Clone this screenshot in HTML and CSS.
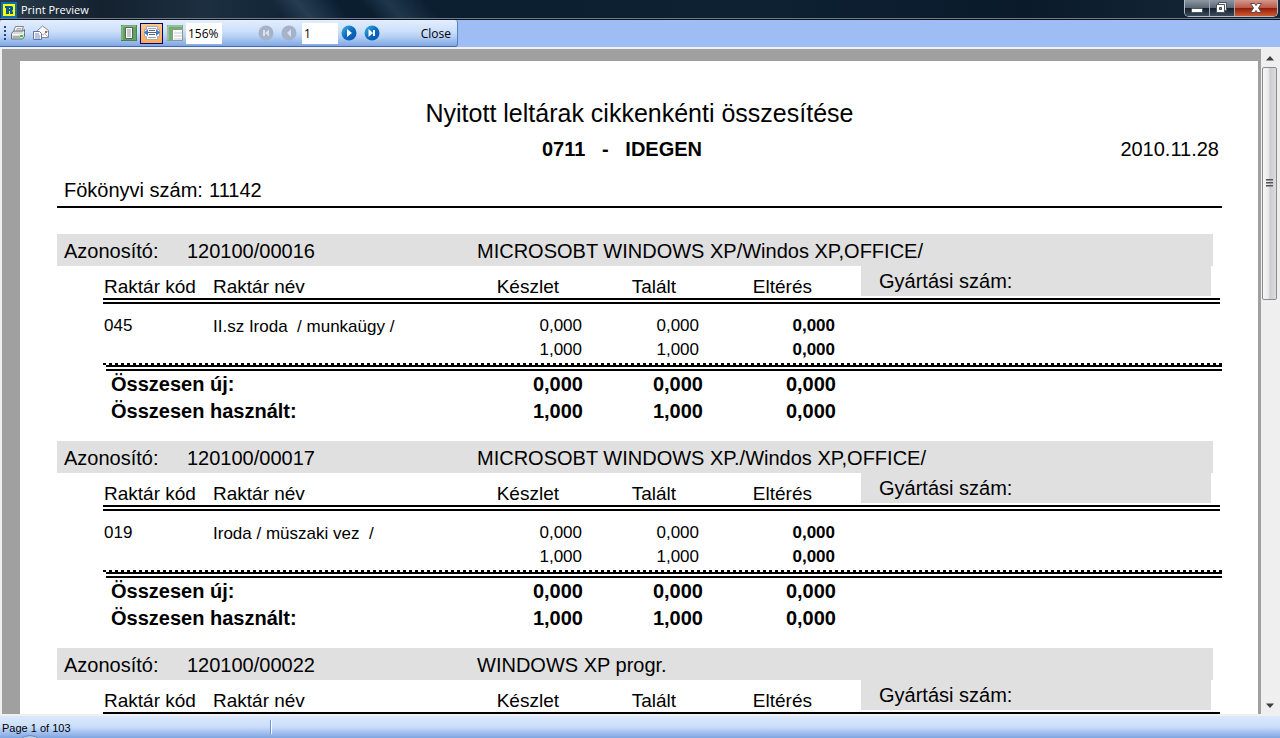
FILE: index.html
```html
<!DOCTYPE html>
<html lang="hu">
<head>
<meta charset="utf-8">
<title>Print Preview</title>
<link rel="stylesheet" href="styles.css">
</head>
<body>
<header class="titlebar">
  <svg class="app-icon" width="16" height="16" viewBox="0 0 16 16" aria-hidden="true">
    <rect width="16" height="16" fill="#0b6fb4"/>
    <rect x="2" y="2" width="12" height="12" fill="#ffff00"/>
    <path d="M4 4h7l1 1v3l-1 1 1 1v2H9v-3H8v3H5V6H4zM8 6v1h1V6z" fill="#075a96" fill-rule="evenodd"/>
  </svg>
  <h1 class="window-title">Print Preview</h1>
  <div class="window-buttons">
    <button class="win-btn" aria-label="Minimize"><svg width="24" height="15" viewBox="0 0 24 15"><rect x="6.500" y="7.500" width="11" height="4" rx="1" fill="#fff" stroke="#4b5560"/></svg></button>
    <button class="win-btn" aria-label="Restore"><svg width="24" height="15" viewBox="0 0 24 15"><path d="M8.500 1.500h8v8h-8z" fill="#eee" stroke="#4b5560"/><path d="M6.500 3.500h8v8h-8z" fill="#fff" stroke="#4b5560"/><path d="M9.500 6.500h2v2h-2z" fill="#8a929b" stroke="#3c4651"/></svg></button>
    <button class="win-btn win-close" aria-label="Close window"><svg width="42" height="15" viewBox="0 0 42 15"><path d="M15.500 2.500h4l1.500 2 1.500-2h4L23.500 7l3 4.500h-4l-1.500-2-1.500 2h-4l3-4.500z" fill="#fff" stroke="#5a4a50"/></svg></button>
  </div>
</header>

<div class="toolbar-area">
  <div class="toolbar" role="toolbar" aria-label="Preview">
    <span class="grip"></span>
    <button class="tool" aria-label="Print"><svg width="16" height="16" viewBox="0 0 16 16"><path d="M5.500 1.500h8l-2 5h-8z" fill="#fff" stroke="#7d8188"/><path d="M6.500 3.500h5M6 5h5" stroke="#a9adb5"/><path d="M1.500 8.500l2-2.500h9l2-1.500v7l-2 2.500h-11z" fill="#d9d9dc" stroke="#6b6f78"/><path d="M2 9.500h10.500L14 7" fill="none" stroke="#f8f8f8"/><path d="M3 12h7" stroke="#7f838b"/><path d="M10 10h3v2h-3z" fill="#27d420"/></svg></button>
    <button class="tool" aria-label="Send by mail"><svg width="16" height="16" viewBox="0 0 16 16"><path d="M4.500 5.500l5-4.500 6 4.500v7h-11z" fill="#fff" stroke="#8086a4"/><path d="M5 6l5 4 5-4M5 12l3-3M15 12l-3-3" fill="none" stroke="#aeb4cc"/><rect x="12" y="6" width="2" height="2" fill="#e0572d"/><path d="M.5 6.500h6l2 2v6h-8z" fill="#f7f9ff" stroke="#6672a4"/><path d="M2 9h4M2 11h5M2 13h5" stroke="#7f8bb8"/></svg></button>
    <span class="tool-gap"></span>
    <button class="tool view" aria-label="Whole page"><svg width="16" height="16" viewBox="0 0 16 16"><rect x=".5" y=".5" width="15" height="15" fill="#62a35f" stroke="#4f7f52"/><path d="M1 15V1h14" fill="none" stroke="#a8cda4"/><path d="M4.500 2.500h7v11h-7z" fill="#fff" stroke="#52625a"/><path d="M6 5h4M6 7h4M6 9h4M6 11h4" stroke="#8894a0"/></svg></button>
    <button class="tool view active" aria-label="Page width" aria-pressed="true"><svg width="16" height="16" viewBox="0 0 16 16"><path d="M2.500 1.500h11v3h2v7h-2v3h-11v-3h-2v-7h2z" fill="#fff" stroke="#a9a9b5"/><path d="M4 3.500h8M4 12.500h8" stroke="#9aa0b0"/><path d="M5 5.500h6M4 7.500h8M5 9.500h6" stroke="#59647c"/><path d="M0 7.500L4 4v7zM16 7.500L12 4v7z" fill="#4679c4"/></svg></button>
    <button class="tool view" aria-label="Zoom"><svg width="16" height="16" viewBox="0 0 16 16"><rect x=".5" y=".5" width="15" height="15" fill="#73ad70" stroke="#7fa481"/><path d="M1 15V1h14" fill="none" stroke="#b8d6b4"/><path d="M5.500 4.500h10v11h-10z" fill="#fff" stroke="#8b9a91"/><path d="M7 8h8M7 11h8M7 14h8" stroke="#c0c7d0"/></svg></button>
    <input class="field" type="text" value="156%" aria-label="Zoom level">
    <span class="nav-gap"></span>
    <button class="tool nav" aria-label="First page" disabled><svg width="16" height="16" viewBox="0 0 16 16"><circle cx="8" cy="8" r="7.500" fill="#a6b2c8"/><path d="M5 5h2v6H5zM11 4.500v7L7 8z" fill="#d8e1f1"/></svg></button>
    <button class="tool nav" aria-label="Previous page" disabled><svg width="16" height="16" viewBox="0 0 16 16"><circle cx="8" cy="8" r="7.500" fill="#a6b2c8"/><path d="M10 4v8L6 8z" fill="#d8e1f1"/></svg></button>
    <input class="field" type="text" value="1" aria-label="Page number">
    <button class="tool nav next" aria-label="Next page"><svg width="16" height="16" viewBox="0 0 16 16"><defs><linearGradient id="ball" x1="0" y1="0" x2="1" y2="1"><stop offset="0" stop-color="#48b4dc"/><stop offset=".5" stop-color="#0a6cc0"/><stop offset="1" stop-color="#0650b4"/></linearGradient></defs><circle cx="8" cy="8" r="7.500" fill="url(#ball)"/><path d="M6 4v8l5-4z" fill="#fff"/></svg></button>
    <button class="tool nav" aria-label="Last page"><svg width="16" height="16" viewBox="0 0 16 16"><circle cx="8" cy="8" r="7.500" fill="url(#ball)"/><path d="M4.500 4v8L9 8zM9 5h2v6H9z" fill="#fff"/></svg></button>
    <button class="close-preview">Close</button>
  </div>
</div>

<div class="workspace">
  <div class="canvas">
    <main class="sheet">
      <h2 class="report-title">Nyitott leltárak cikkenkénti összesítése</h2>
      <div class="report-sub">
        <p class="warehouse">0711   -   IDEGEN</p>
        <p class="report-date">2010.11.28</p>
      </div>
      <p class="ledger"><span>Fökönyvi szám:</span><span>11142</span></p>

      <section class="group">
        <div class="band"><span>Azonosító:</span><span>120100/00016</span><span>MICROSOBT WINDOWS XP/Windos XP,OFFICE/</span></div>
        <table class="stock">
          <colgroup><col class="c-code"><col class="c-name"><col class="c-stock"><col class="c-found"><col class="c-diff"><col></colgroup>
          <thead><tr><th>Raktár kód</th><th>Raktár név</th><th class="num">Készlet</th><th class="num">Talált</th><th class="num">Eltérés</th><th class="serial"><div class="serial-box">Gyártási szám:</div></th></tr></thead>
          <tbody>
            <tr><td>045</td><td class="name">II.sz Iroda  / munkaügy /</td><td class="num">0,000</td><td class="num">0,000</td><td class="num diff">0,000</td><td></td></tr>
            <tr><td></td><td></td><td class="num">1,000</td><td class="num">1,000</td><td class="num diff">0,000</td><td></td></tr>
          </tbody>
        </table>
        <div class="dots"></div>
        <table class="totals">
          <colgroup><col class="t-label"><col class="t-stock"><col class="t-found"><col class="t-diff"><col></colgroup>
          <tbody>
            <tr><th scope="row">Összesen új:</th><td>0,000</td><td>0,000</td><td>0,000</td><td></td></tr>
            <tr><th scope="row">Összesen használt:</th><td>1,000</td><td>1,000</td><td>0,000</td><td></td></tr>
          </tbody>
        </table>
      </section>

      <section class="group">
        <div class="band"><span>Azonosító:</span><span>120100/00017</span><span>MICROSOBT WINDOWS XP./Windos XP,OFFICE/</span></div>
        <table class="stock">
          <colgroup><col class="c-code"><col class="c-name"><col class="c-stock"><col class="c-found"><col class="c-diff"><col></colgroup>
          <thead><tr><th>Raktár kód</th><th>Raktár név</th><th class="num">Készlet</th><th class="num">Talált</th><th class="num">Eltérés</th><th class="serial"><div class="serial-box">Gyártási szám:</div></th></tr></thead>
          <tbody>
            <tr><td>019</td><td class="name">Iroda / müszaki vez  /</td><td class="num">0,000</td><td class="num">0,000</td><td class="num diff">0,000</td><td></td></tr>
            <tr><td></td><td></td><td class="num">1,000</td><td class="num">1,000</td><td class="num diff">0,000</td><td></td></tr>
          </tbody>
        </table>
        <div class="dots"></div>
        <table class="totals">
          <colgroup><col class="t-label"><col class="t-stock"><col class="t-found"><col class="t-diff"><col></colgroup>
          <tbody>
            <tr><th scope="row">Összesen új:</th><td>0,000</td><td>0,000</td><td>0,000</td><td></td></tr>
            <tr><th scope="row">Összesen használt:</th><td>1,000</td><td>1,000</td><td>0,000</td><td></td></tr>
          </tbody>
        </table>
      </section>

      <section class="group">
        <div class="band"><span>Azonosító:</span><span>120100/00022</span><span>WINDOWS XP progr.</span></div>
        <table class="stock">
          <colgroup><col class="c-code"><col class="c-name"><col class="c-stock"><col class="c-found"><col class="c-diff"><col></colgroup>
          <thead><tr><th>Raktár kód</th><th>Raktár név</th><th class="num">Készlet</th><th class="num">Talált</th><th class="num">Eltérés</th><th class="serial"><div class="serial-box">Gyártási szám:</div></th></tr></thead>
        </table>
      </section>
    </main>
  </div>
  <div class="scrollbar">
    <button class="arrow" aria-label="Scroll up"><svg width="8" height="5" viewBox="0 0 8 5"><path d="M0 4.500L4 0l4 4.500z" fill="#3c3c3c"/></svg></button>
    <div class="track"><div class="thumb"><span class="thumb-grip"></span></div></div>
    <button class="arrow" aria-label="Scroll down"><svg width="8" height="5" viewBox="0 0 8 5"><path d="M0 .5h8L4 5z" fill="#3c3c3c"/></svg></button>
  </div>
</div>

<footer class="statusbar">
  <span class="page-status">Page 1 of 103</span>
  <span class="divider"></span>
  <span class="orb"></span>
</footer>
</body>
</html>
```
FILE: styles.css
```css
* { box-sizing: border-box; }
body {
  margin: 0;
  height: 100vh;
  display: flex;
  flex-direction: column;
  overflow: hidden;
  background: #f0f0f0;
  color: #000;
  font-family: "Open Sans", "Noto Sans", sans-serif;
  font-size: 12px;
}
h1, h2, p { margin: 0; font-weight: normal; }
button { margin: 0; padding: 0; border: 0; background: none; font: inherit; color: inherit; }
svg { display: block; }

.titlebar {
  flex: none;
  height: 20px;
  display: flex;
  align-items: flex-start;
  padding: 0 2px 0 0;
  color: #fff;
  border-bottom: 1px solid #0a0f18;
  box-shadow: inset 0 -1px #6f7b88;
  background:
    linear-gradient(50deg, transparent 22%, rgba(70, 100, 125, .4) 24%, transparent 27%, transparent 29%, rgba(70, 100, 125, .35) 31%, transparent 34%),
    linear-gradient(90deg, #2a3c4c, #14212f 8%, #1c2f40 16%, #0b1e30 27%, #0d2133 60%, #0a1a2b 80%, #17293a);
}
.app-icon { margin: 2px 0 0 1px; }
.window-title { margin-left: 4px; font-size: 11px; line-height: 19px; }
.window-buttons {
  display: flex;
  margin-left: auto;
  height: 17px;
  border: 1px solid #b4bcc6;
  border-top: 0;
  border-radius: 0 0 5px 5px;
  overflow: hidden;
}
.win-btn {
  border-right: 1px solid #a0a9b3;
  background: linear-gradient(#8d97a3, #5a6775 48%, #111c2a 50%, #3d4c5c);
}
.win-btn:last-child { border-right: 0; }
.win-close { background: linear-gradient(#d5978c, #b85a49 48%, #8f1b08 50%, #cf5a30); }

.toolbar-area { flex: none; height: 27px; background: #9ebdf5; }
.toolbar {
  width: 458px;
  height: 27px;
  display: flex;
  align-items: center;
  padding-left: 4px;
  border-right: 1px solid #5a7fc4;
  border-bottom: 1px solid #3f69b5;
  border-radius: 3px 3px 3px 0;
  background: linear-gradient(#e3eefe, #cbdffa 45%, #b4cef5 65%, #80a6e2);
}
.grip {
  width: 2px;
  height: 14px;
  margin-right: 4px;
  background: repeating-linear-gradient(#27418a 0 2px, transparent 2px 4px);
}
.tool { width: 23px; height: 21px; display: flex; align-items: center; }
.tool.view { justify-content: center; width: 23px; }
.tool.view.active { border: 1px solid #000080; background: linear-gradient(#ffc98c, #ffab4e); }
.tool-gap { width: 61px; }
.field {
  width: 36px;
  height: 21px;
  padding: 0 2px;
  border: 0;
  background: #fff;
  color: #000;
  font: 12px "Open Sans", "Noto Sans", sans-serif;
}
.nav-gap { width: 36px; }
.nav:disabled + .field { margin-left: -2px; }
.nav.next { margin-left: 3px; }
.close-preview { margin-left: auto; padding: 0 6px; line-height: 21px; }

.workspace { flex: 1; min-height: 0; display: flex; padding: 2px 0 2px 2px; }
.canvas { flex: 1; min-width: 0; display: flex; padding: 12px 3px 0 18px; background: #a0a0a0; overflow: hidden; }
.sheet {
  flex: 1;
  min-width: 0;
  padding: 36px 36px 0 37px;
  background: #fff;
  font-family: "Liberation Sans", Arial, sans-serif;
  font-size: 20px;
}
.report-title { font-size: 25px; line-height: 32px; text-align: center; }
.report-sub { display: grid; grid-template-columns: 1fr auto 1fr; line-height: 40px; padding-right: 3px; }
.warehouse { grid-column: 2; margin-right: 32px; font-weight: bold; white-space: pre; }
.report-date { text-align: right; }
.ledger {
  height: 39px;
  display: grid;
  grid-template-columns: 145px 1fr;
  margin-bottom: 26px;
  padding-left: 7px;
  line-height: 42px;
  border-bottom: 2px solid #000;
}

.group { padding-bottom: 16px; }
.band {
  display: grid;
  grid-template-columns: 123px 290px 1fr;
  margin-right: 9px;
  padding: 2px 0 0 7px;
  line-height: 30px;
  background: #e0e0e0;
}
table { border-collapse: separate; border-spacing: 0; table-layout: fixed; }
th, td { padding: 0; text-align: left; font-weight: normal; }
.stock { width: calc(100% - 48px); margin-left: 46px; font-size: 17px; }
.c-code { width: 109px; }
.c-name { width: 251px; }
.c-stock { width: 119px; }
.c-found { width: 117px; }
.c-diff { width: 136px; }
.t-label { width: 357px; }
.t-stock { width: 120px; }
.t-found { width: 120px; }
.t-diff { width: 133px; }
.stock th { height: 38px; padding: 10px 0 0 1px; font-size: 19px; line-height: 22px; border-bottom: 6px double #000; }
.stock th.num { padding-right: 23px; text-align: right; }
.stock th.serial { padding: 0 9px 0 26px; vertical-align: top; font-size: 20px; line-height: 30px; }
.serial-box { padding-left: 18px; background: #e0e0e0; }
.stock td { height: 24px; padding-left: 1px; line-height: 22px; white-space: pre; vertical-align: bottom; }
.stock tbody tr:first-child td { height: 33px; }
.stock td.name { line-height: 20px; }
.stock td.num { text-align: right; }
.diff { font-weight: bold; }
.dots {
  height: 2px;
  margin: 2px 0 0 46px;
  background: repeating-linear-gradient(90deg, #000 0 3px, transparent 3px 6px);
}
.totals { width: calc(100% - 49px); margin-left: 49px; border-top: 6px double #000; }
.totals th, .totals td { height: 27px; line-height: 27px; font-weight: bold; }
.totals th { padding-left: 5px; }
.totals td { text-align: right; }

.scrollbar { flex: none; width: 19px; display: flex; flex-direction: column; padding: 0 3px 0 1px; background: #efefef; }
.arrow { height: 18px; display: flex; align-items: center; justify-content: center; }
.track { flex: 1; min-height: 0; }
.thumb {
  height: 37%;
  display: flex;
  align-items: center;
  justify-content: center;
  border: 1px solid #8b8b8b;
  border-radius: 2px;
  background: linear-gradient(90deg, #f6f6f6, #ebebeb 40%, #cdcdd1 55%, #dcdcdf);
}
.thumb-grip { width: 7px; height: 8px; background: repeating-linear-gradient(#555 0 1px, #999 1px 2px, transparent 2px 3px); }

.statusbar {
  flex: none;
  position: relative;
  height: 22px;
  display: flex;
  align-items: center;
  padding-left: 2px;
  overflow: hidden;
  background: linear-gradient(#dbe9fd, #c9ddfa 50%, #a9c6f2 70%, #7fa5e0);
  font-family: "Liberation Sans", Arial, sans-serif;
  font-size: 11px;
}
.page-status { width: 268px; padding-top: 2px; }
.divider { width: 2px; height: 14px; background: linear-gradient(90deg, #6a92d6 50%, #fff 50%); }
.orb { position: absolute; left: 15px; top: 19px; width: 30px; height: 30px; border: 1px solid #6b8bbd; border-radius: 50%; background: #b5cdea; }
```
